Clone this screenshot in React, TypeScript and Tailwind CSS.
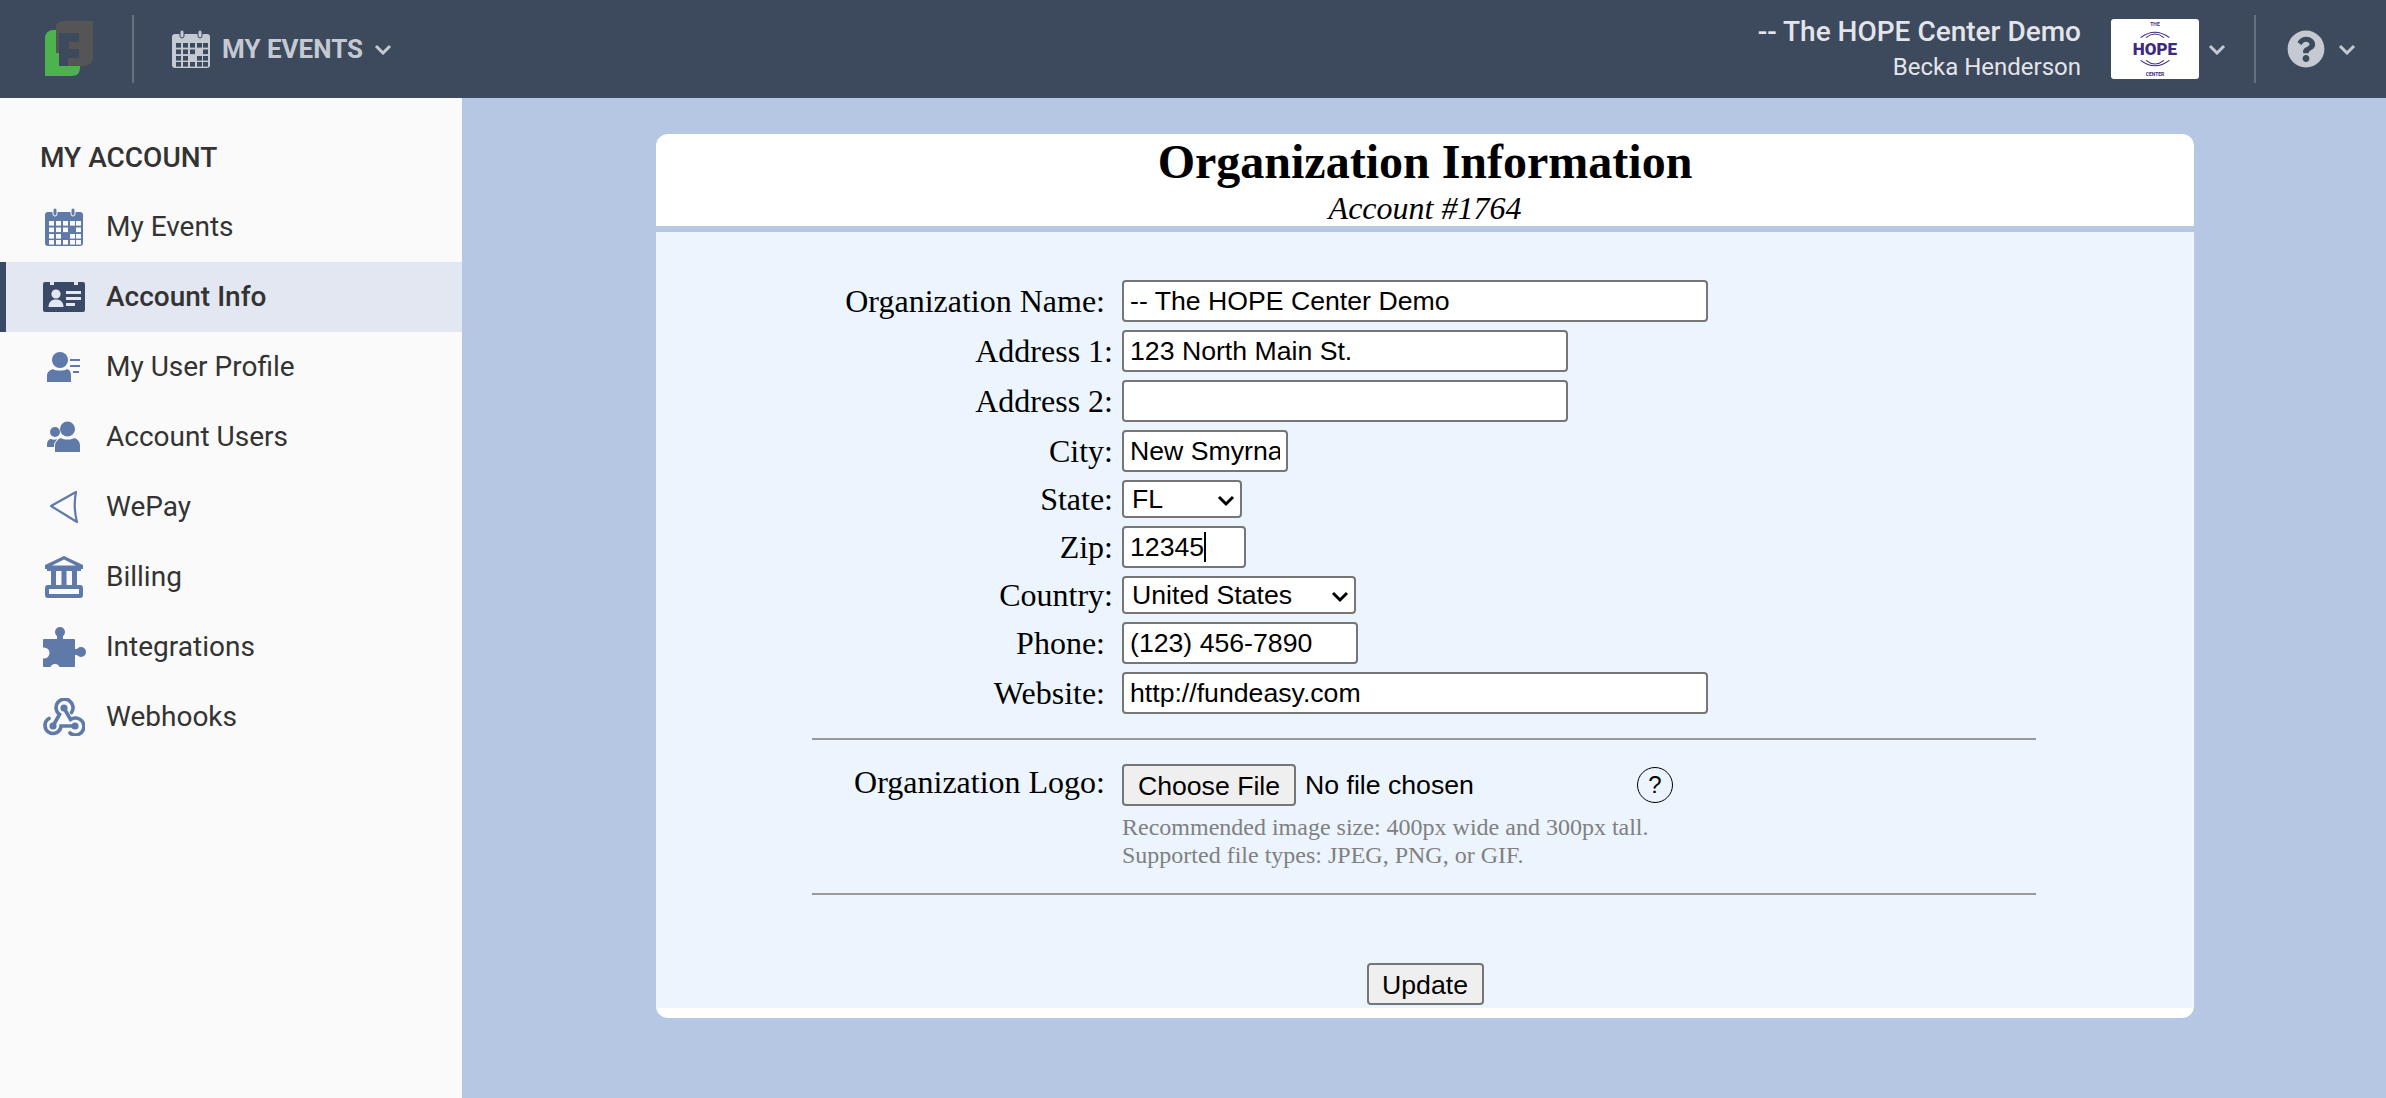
import React from "react";
import { FaQuestionCircle } from "react-icons/fa";

const ICON = "#5f79a8";

function Calendar({ color, hole }: { color: string; hole: string }) {
  const cols = [4, 11, 18, 25, 31];
  const rows = [13, 19.5, 26, 32];
  return (
    <svg width="38" height="38" viewBox="0 0 38 38">
      <rect x="0" y="4" width="38" height="34" rx="3" fill={color} />
      <rect x="8" y="0" width="4" height="8" rx="2" fill={color} stroke={hole} strokeWidth="1" />
      <rect x="26" y="0" width="4" height="8" rx="2" fill={color} stroke={hole} strokeWidth="1" />
      {rows.map((y, r) =>
        cols.map((x, c) =>
          r === 2 && c === 2 ? null : r === 1 && c === 3 ? null : (
            <rect key={`${r}-${c}`} x={x} y={y} width="5" height="4.6" fill={hole} />
          )
        )
      )}
    </svg>
  );
}

function IdCard() {
  return (
    <svg width="42" height="30" viewBox="0 0 42 30">
      <path d="M2 0h5v3h4V0h20v3h4V0h5a2 2 0 0 1 2 2v26a2 2 0 0 1-2 2H2a2 2 0 0 1-2-2V2a2 2 0 0 1 2-2z" fill="#3a4a66" />
      <circle cx="13" cy="12" r="4.6" fill="#e3e7f1" />
      <path d="M5.5 25c0-5 3-7.500 7.500-7.500s7.500 2.500 7.500 7.500z" fill="#e3e7f1" />
      <rect x="23" y="9" width="15" height="3" fill="#e3e7f1" />
      <rect x="23" y="15" width="15" height="3" fill="#e3e7f1" />
      <rect x="23" y="21" width="9" height="3" fill="#e3e7f1" />
    </svg>
  );
}

function Profile() {
  return (
    <svg width="34" height="30" viewBox="0 0 34 30">
      <circle cx="13" cy="8" r="8" fill={ICON} />
      <path d="M0 30v-6c0-4 3-6 6-7 2 2 12 2 14 0 3 1 4 3 4 7v6z" fill={ICON} />
      <rect x="23" y="7" width="10" height="2" fill={ICON} />
      <rect x="23" y="13" width="10" height="2" fill={ICON} />
      <rect x="26" y="19" width="6" height="2" fill={ICON} />
    </svg>
  );
}

function Users() {
  return (
    <svg width="34" height="32" viewBox="0 0 34 32">
      <circle cx="20.5" cy="8" r="7.5" fill={ICON} />
      <path d="M8 31v-6c0-4 3-7 6-8 3 2 10 2 13 0 4 1 6 4 6 8v6z" fill={ICON} />
      <circle cx="8" cy="11" r="5" fill={ICON} />
      <path d="M0 26v-3c0-3 2-5 4-5 2 1 4 1 6 0l-3 5v3z" fill={ICON} />
    </svg>
  );
}

function Send() {
  return (
    <svg width="30" height="34" viewBox="0 0 30 34">
      <path d="M2 16 L27 2 Q24 17 28 32 Z" fill="none" stroke={ICON} strokeWidth="2.2" strokeLinejoin="round" />
    </svg>
  );
}

function Bank() {
  return (
    <svg width="38" height="42" viewBox="0 0 38 42" fill={ICON}>
      <path d="M19 0 38 9v4H0V9zM19 3.5 7 9.5h24z" fillRule="evenodd" />
      <rect x="2" y="11" width="34" height="4" />
      <rect x="6" y="15" width="5" height="14" />
      <rect x="16.5" y="15" width="5" height="14" />
      <rect x="27" y="15" width="5" height="14" />
      <path d="M3 29h32a3 3 0 0 1 3 3v7a3 3 0 0 1-3 3H3a3 3 0 0 1-3-3v-7a3 3 0 0 1 3-3zM4 33v5h30v-5z" fillRule="evenodd" />
    </svg>
  );
}

function Puzzle() {
  return (
    <svg width="43" height="41" viewBox="0 0 43 41">
      <rect x="0" y="12" width="32" height="28" rx="1" fill={ICON} />
      <circle cx="17" cy="5" r="5" fill={ICON} />
      <rect x="14" y="8" width="6" height="6" fill={ICON} />
      <circle cx="38" cy="25" r="5" fill={ICON} />
      <rect x="30" y="22" width="6" height="6" fill={ICON} />
      <circle cx="1" cy="26" r="5.5" fill="#fafafa" />
      <circle cx="12" cy="42" r="5" fill="#fafafa" />
    </svg>
  );
}

function Webhook() {
  return (
    <svg width="42" height="38" viewBox="0 0 42 38" fill="none" stroke={ICON} strokeWidth="3.6" strokeLinecap="round">
      <path d="M10 28 L16.5 16.5 A8.5 8.5 0 1 1 28.5 14.5" />
      <path d="M21 10 L27.500 21.500 A8.500 8.500 0 1 1 27 35" />
      <path d="M32 28 H18 A8 8 0 1 1 6 20.500" />
      <circle cx="21" cy="10" r="1.800" fill={ICON} />
      <circle cx="10" cy="28" r="1.800" fill={ICON} />
      <circle cx="32" cy="28" r="1.800" fill={ICON} />
    </svg>
  );
}

function Chevron({ className, color }: { className?: string; color: string }) {
  return (
    <svg className={className} width="18" height="11" viewBox="0 0 18 11">
      <path d="M2 2l7 7 7-7" fill="none" stroke={color} strokeWidth="3" />
    </svg>
  );
}

function NavItem({ icon, label, active }: { icon: React.ReactNode; label: string; active?: boolean }) {
  return (
    <div className={`flex items-center h-[70px] ${active ? "bg-[#e3e7f1] border-l-[6px] border-[#3a4a66]" : ""}`}>
      <div className={`shrink-0 ${active ? "w-[100px] pl-[36px]" : "w-[106px] pl-[42px]"}`}>
        <div className="flex justify-center w-[44px]">{icon}</div>
      </div>
      <span className={`text-[28px] text-[#333333] ${active ? "font-medium" : ""}`}>{label}</span>
    </div>
  );
}

const inputCls =
  "h-[42px] border-2 border-[#767676] rounded-[4px] bg-white px-[6px] text-[26.67px] text-black outline-none font-['Liberation_Sans',sans-serif]";

function Row({ label, pr = "pr-[9px]", children }: { label: string; pr?: string; children: React.ReactNode }) {
  return (
    <div className="flex items-center">
      <label className={`w-[466px] shrink-0 text-right text-[32px] leading-[36px] ${pr}`}>{label}</label>
      {children}
    </div>
  );
}

function Select({ value, widthCls }: { value: string; widthCls: string }) {
  return (
    <div className={`relative h-[38px] ${widthCls}`}>
      <select
        defaultValue={value}
        className="appearance-none w-full h-full border-2 border-[#767676] rounded-[4px] bg-white pl-[8px] text-[26.67px] leading-[30px] text-black font-['Liberation_Sans',sans-serif]"
      >
        <option>{value}</option>
      </select>
      <svg className="absolute right-[7px] top-[15px] pointer-events-none" width="18" height="12" viewBox="0 0 18 12">
        <path d="M2 2l7 7 7-7" fill="none" stroke="#000" strokeWidth="3" />
      </svg>
    </div>
  );
}

export default function App() {
  return (
    <div className="w-[2386px] h-[1098px] overflow-hidden flex flex-col bg-[#b5c7e3] font-['Roboto',sans-serif]">
      <header className="h-[98px] shrink-0 bg-[#3d495c] flex items-center">
        <div className="w-[132px] flex justify-center shrink-0 pl-[8px]">
          <svg width="50" height="56" viewBox="0 0 50 56">
            <path d="M14 9h-6a8 8 0 0 0-8 8v38h26c8 0 9-4 9-10H14z" fill="#4db34d" />
            <path d="M20 0h28v36c0 6-4 9-10 9h-15v-8h11v-9h-10v-7h10v-9h-20v20h-3V6c0-4 4-6 9-6z" fill="#555555" />
          </svg>
        </div>
        <div className="w-[2px] h-[68px] bg-[#667080]" />
        <div className="flex items-center ml-[38px]">
          <Calendar color="#c5c9d1" hole="#3d495c" />
          <span className="ml-[12px] text-[26px] font-bold text-[#c5c9d1]">MY EVENTS</span>
          <Chevron className="ml-[11px]" color="#c5c9d1" />
        </div>
        <div className="flex-1" />
        <div className="flex flex-col items-end mr-[30px] mb-[3px]">
          <span className="text-[28px] leading-[38px] font-medium text-[#e3e5ea]">-- The HOPE Center Demo</span>
          <span className="text-[24px] leading-[32px] text-[#e3e5ea]">Becka Henderson</span>
        </div>
        <div className="w-[88px] h-[60px] bg-white rounded-[3px] flex flex-col items-center justify-between py-[2px] overflow-hidden">
          <span className="text-[5px] leading-[6px] text-[#3d2a80] font-bold">THE</span>
          <svg width="36" height="8" viewBox="0 0 40 8"><path d="M4 8Q20-4 36 8M10 8Q20 0 30 8" fill="none" stroke="#3d2a80" strokeWidth="1.2" /></svg>
          <span className="text-[17px] leading-[16px] font-black text-[#3d2a80]">HOPE</span>
          <svg width="36" height="8" viewBox="0 0 40 8"><path d="M4 0Q20 12 36 0M10 0Q20 8 30 0" fill="none" stroke="#3d2a80" strokeWidth="1.2" /></svg>
          <span className="text-[5px] leading-[6px] text-[#3d2a80] font-bold">CENTER</span>
        </div>
        <Chevron className="ml-[9px]" color="#c5c9d1" />
        <div className="w-[2px] h-[68px] bg-[#667080] ml-[28px]" />
        <FaQuestionCircle className="ml-[31px] text-[#c5c9d1]" size={38} />
        <Chevron className="ml-[13px] mr-[30px]" color="#c5c9d1" />
      </header>
      <div className="flex flex-1 min-h-0">
        <aside className="w-[462px] shrink-0 bg-[#fafafa]">
          <div className="h-[94px] pl-[40px] pt-[44px] text-[28px] leading-[32px] font-medium text-[#333333]">MY ACCOUNT</div>
          <NavItem icon={<Calendar color={ICON} hole="#fafafa" />} label="My Events" />
          <NavItem icon={<IdCard />} label="Account Info" active />
          <NavItem icon={<Profile />} label="My User Profile" />
          <NavItem icon={<Users />} label="Account Users" />
          <NavItem icon={<Send />} label="WePay" />
          <NavItem icon={<Bank />} label="Billing" />
          <NavItem icon={<Puzzle />} label="Integrations" />
          <NavItem icon={<Webhook />} label="Webhooks" />
        </aside>
        <main className="flex-1 pt-[36px] pl-[194px]">
          <div className="w-[1538px] h-[884px] bg-white rounded-[12px] overflow-hidden flex flex-col font-['Liberation_Serif',serif] text-black">
            <div className="h-[92px] shrink-0 flex flex-col items-center">
              <h1 className="text-[48px] leading-[56px] font-bold">Organization Information</h1>
              <div className="text-[32px] leading-[36px] italic">Account #1764</div>
            </div>
            <div className="h-[6px] shrink-0 bg-[#b5c7e3]" />
            <div className="h-[776px] shrink-0 bg-[#ecf4fe] pt-[48px]">
              <div className="flex flex-col gap-[8px]">
                <Row label="Organization Name:" pr="pr-[17px]">
                  <input className={`${inputCls} w-[586px]`} defaultValue="-- The HOPE Center Demo" />
                </Row>
                <Row label="Address 1:">
                  <input className={`${inputCls} w-[446px]`} defaultValue="123 North Main St." />
                </Row>
                <Row label="Address 2:">
                  <input className={`${inputCls} w-[446px]`} defaultValue="" />
                </Row>
                <Row label="City:">
                  <input className={`${inputCls} w-[166px]`} defaultValue="New Smyrna" />
                </Row>
                <Row label="State:">
                  <Select value="FL" widthCls="w-[120px]" />
                </Row>
                <Row label="Zip:">
                  <div className="relative">
                    <input className={`${inputCls} w-[124px]`} defaultValue="12345" />
                    <div className="absolute left-[82px] top-[6px] w-[2px] h-[30px] bg-black" />
                  </div>
                </Row>
                <Row label="Country:">
                  <Select value="United States" widthCls="w-[234px]" />
                </Row>
                <Row label="Phone:" pr="pr-[17px]">
                  <input className={`${inputCls} w-[236px]`} defaultValue="(123) 456-7890" />
                </Row>
                <Row label="Website:" pr="pr-[17px]">
                  <input className={`${inputCls} w-[586px]`} defaultValue="http://fundeasy.com" />
                </Row>
              </div>
              <div className="h-[2px] bg-[#999999] ml-[156px] mr-[158px] mt-[24px]" />
              <div className="flex items-start mt-[24px]">
                <label className="w-[466px] shrink-0 text-right text-[32px] leading-[36px] pr-[17px]">Organization Logo:</label>
                <div className="flex flex-col">
                  <div className="flex items-center font-['Liberation_Sans',sans-serif] text-[26.67px]">
                    <button className="h-[42px] w-[174px] border-2 border-[#767676] rounded-[4px] bg-[#efefef]">Choose File</button>
                    <span className="ml-[9px] w-[332px]">No file chosen</span>
                    <span className="w-[36px] h-[36px] rounded-full border-[1.5px] border-black flex items-center justify-center text-[24px]">?</span>
                  </div>
                  <div className="mt-[7px] text-[24px] leading-[28px] text-[#808080]">
                    Recommended image size: 400px wide and 300px tall.
                    <br />
                    Supported file types: JPEG, PNG, or GIF.
                  </div>
                </div>
              </div>
              <div className="h-[2px] bg-[#999999] ml-[156px] mr-[158px] mt-[24px]" />
              <div className="flex justify-center mt-[68px]">
                <button className="h-[42px] w-[117px] border-2 border-[#767676] rounded-[4px] bg-[#efefef] text-[26.67px] font-['Liberation_Sans',sans-serif]">Update</button>
              </div>
            </div>
          </div>
        </main>
      </div>
    </div>
  );
}
